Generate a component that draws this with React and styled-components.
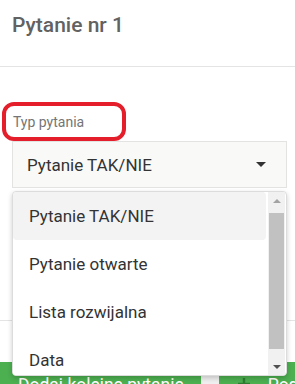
import React from 'react';
import styled, { createGlobalStyle } from 'styled-components';

const GlobalStyle = createGlobalStyle`
    html, body {
        margin: 0;
        padding: 0;
        background: #fff;
        font-family: Roboto, "Liberation Sans", sans-serif;
    }
    body {
        width: 295px;
        height: 384px;
        overflow: hidden;
    }
`;

const options = ['Pytanie TAK/NIE', 'Pytanie otwarte', 'Lista rozwijalna', 'Data', 'Godzina'];

function App() {
    return (
        <Page>
            <GlobalStyle />
            <Header>
                <Title>Pytanie nr 1</Title>
            </Header>
            <Body>
                <LabelWrap>
                    <Label>Typ pytania</Label>
                    <Highlight />
                </LabelWrap>
                <SelectWrap>
                    <SelectBox>
                        <SelectValue>Pytanie TAK/NIE</SelectValue>
                        <Caret />
                    </SelectBox>
                    <Menu>
                        <OptionList>
                            {options.map((opt, i) => (
                                <Option key={opt} active={i === 0}>{opt}</Option>
                            ))}
                        </OptionList>
                        <ScrollBar>
                            <ScrollButton>
                                <Arrow up color="#a3a3a3" />
                            </ScrollButton>
                            <Track>
                                <Thumb />
                            </Track>
                            <ScrollButton>
                                <Arrow color="#505050" />
                            </ScrollButton>
                        </ScrollBar>
                    </Menu>
                </SelectWrap>
            </Body>
            <Footer>
                <Button>Dodaj kolejne pytanie</Button>
                <Gap />
                <Button>
                    <PlusIcon />
                    Podgląd
                </Button>
            </Footer>
        </Page>
    );
}

function PlusIcon() {
    return (
        <svg width="14" height="14" viewBox="0 0 14 14">
            <path d="M7 1v12M1 7h12" stroke="#2e7d32" strokeWidth="2.4" />
        </svg>
    );
}

const Page = styled.div`
    width: 295px;
    height: 384px;
    overflow: hidden;
    display: flex;
    flex-direction: column;
`;

const Header = styled.div`
    flex-shrink: 0;
    height: 67px;
    box-sizing: border-box;
    padding: 13px 12px 0;
    border-bottom: 1px solid #e4e4e4;
`;

const Title = styled.h1`
    margin: 0;
    font-size: 21px;
    line-height: 24px;
    font-weight: 500;
    color: #626262;
`;

const Body = styled.div`
    flex-shrink: 0;
    height: 253px;
    box-sizing: border-box;
    padding: 47px 8px 0 12px;
`;

const LabelWrap = styled.div`
    position: relative;
    padding-left: 1px;
    height: 27px;
`;

const Label = styled.label`
    display: block;
    font-size: 14px;
    line-height: 16px;
    color: #757575;
`;

const Highlight = styled.div`
    position: absolute;
    left: -10px;
    top: -12px;
    width: 124px;
    height: 39px;
    box-sizing: border-box;
    border: 4px solid #e41e2b;
    border-radius: 12px;
`;

const SelectWrap = styled.div`
    position: relative;
`;

const SelectBox = styled.div`
    height: 47px;
    box-sizing: border-box;
    border: 1px solid #e3e3e1;
    background: #f9f9f7;
    display: flex;
    align-items: center;
    justify-content: space-between;
    padding: 0 20px 0 14px;
`;

const SelectValue = styled.span`
    font-size: 17px;
    color: #333;
`;

const Caret = styled.span`
    width: 0;
    height: 0;
    border-left: 5px solid transparent;
    border-right: 5px solid transparent;
    border-top: 5px solid #333;
`;

const Menu = styled.div`
    position: absolute;
    top: 50px;
    left: 0;
    right: 0;
    height: 185px;
    box-sizing: border-box;
    background: #fff;
    border: 1px solid #dcdcdc;
    border-radius: 4px;
    box-shadow: 0 2px 5px rgba(0, 0, 0, 0.2);
    display: flex;
    overflow: hidden;
    z-index: 2;
`;

const OptionList = styled.ul`
    flex: 1;
    margin: 0;
    padding: 0 2px 0 0;
    list-style: none;
    overflow: hidden;
`;

const Option = styled.li`
    height: 48px;
    display: flex;
    align-items: center;
    padding-left: 16px;
    font-size: 17px;
    color: #333;
    border-radius: 4px;
    background: ${(p) => (p.active ? '#f3f3f3' : '#fff')};
`;

const ScrollBar = styled.div`
    width: 17px;
    margin-right: 1px;
    background: #f1f1f1;
    display: flex;
    flex-direction: column;
`;

const ScrollButton = styled.div`
    height: 17px;
    display: flex;
    align-items: center;
    justify-content: center;
`;

const Arrow = styled.span`
    width: 0;
    height: 0;
    border-left: 4px solid transparent;
    border-right: 4px solid transparent;
    ${(p) => (p.up ? `border-bottom: 4px solid ${p.color};` : `border-top: 4px solid ${p.color};`)}
`;

const Track = styled.div`
    flex: 1;
    padding: 4px 1px 0;
`;

const Thumb = styled.div`
    height: 136px;
    background: #c1c1c1;
`;

const Footer = styled.div`
    flex-shrink: 0;
    border-top: 1px solid #e4e4e4;
    padding-top: 41px;
    display: flex;
    align-items: flex-start;
`;

const Button = styled.button`
    height: 44px;
    border: none;
    background: #4caf50;
    color: #fff;
    font-family: Roboto, "Liberation Sans", sans-serif;
    font-size: 17.5px;
    padding: 13px 17px 0 18px;
    display: flex;
    align-items: flex-start;
    gap: 17px;
    white-space: nowrap;
    flex-shrink: 0;

    svg {
        margin-top: 2px;
    }
`;

const Gap = styled.div`
    width: 18px;
    height: 44px;
    flex-shrink: 0;
    background: #efefef;
`;

export default App;
